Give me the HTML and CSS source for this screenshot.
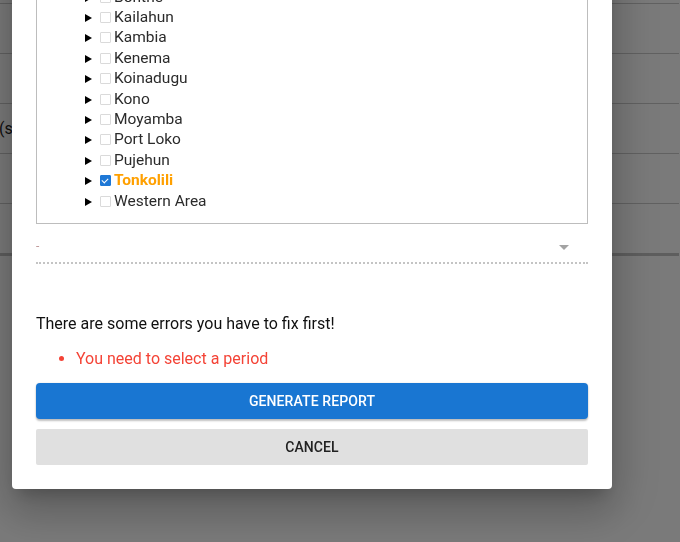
FILE: index.html
```html
<!DOCTYPE html>
<html lang="en">
<head>
    <meta charset="UTF-8">
    <meta name="viewport" content="width=device-width, initial-scale=1.0">
    <title>Generate report</title>
    <link rel="stylesheet" href="styles.css">
</head>
<body>
    <!-- pagina sotto il dialog -->
    <table class="page-table">
        <tr><td></td><td></td></tr>
        <tr><td></td><td></td></tr>
        <tr><td></td><td></td></tr>
        <tr><td>(sum)</td><td></td></tr>
        <tr><td></td><td></td></tr>
        <tr><td></td><td></td></tr>
    </table>

    <div class="overlay"></div>

    <div class="dialog">
        <div class="tree-box">
            <ul class="tree">
                <li><span class="arrow open"></span><span class="check"></span>Sierra Leone
                    <ul class="tree">
                        <li><span class="arrow"></span><span class="check"></span>Bo</li>
                        <li><span class="arrow"></span><span class="check"></span>Bombali</li>
                        <li><span class="arrow"></span><span class="check"></span>Bonthe</li>
                        <li><span class="arrow"></span><span class="check"></span>Kailahun</li>
                        <li><span class="arrow"></span><span class="check"></span>Kambia</li>
                        <li><span class="arrow"></span><span class="check"></span>Kenema</li>
                        <li><span class="arrow"></span><span class="check"></span>Koinadugu</li>
                        <li><span class="arrow"></span><span class="check"></span>Kono</li>
                        <li><span class="arrow"></span><span class="check"></span>Moyamba</li>
                        <li><span class="arrow"></span><span class="check"></span>Port Loko</li>
                        <li><span class="arrow"></span><span class="check"></span>Pujehun</li>
                        <li class="selected"><span class="arrow"></span><span class="check checked"></span>Tonkolili</li>
                        <li><span class="arrow"></span><span class="check"></span>Western Area</li>
                    </ul>
                </li>
            </ul>
        </div>

        <div class="select-field">
            <span class="select-value">-</span>
            <span class="select-arrow"></span>
        </div>

        <div class="errors">
            <p>There are some errors you have to fix first!</p>
            <ul>
                <li>You need to select a period</li>
            </ul>
        </div>

        <button type="button" class="btn btn-primary">Generate report</button>
        <button type="button" class="btn btn-cancel">Cancel</button>
    </div>
</body>
</html>
```

FILE: styles.css
```css
body {
    margin: 0;
    font-family: Roboto, "Liberation Sans", sans-serif;
    background-color: #fff;
    height: 542px;
    overflow: hidden;
}
.page-table {
    border-collapse: collapse;
    width: 100%;
    margin-top: -46px;
    margin-left: -1px;
    font-size: 16px;
    color: #222;
}
.page-table td {
    height: 49px;
    padding: 0;
    border-bottom: 1px solid #cbcbcb;
}
.page-table tr:last-child td {
    border-bottom: 3px solid #c4c4c4;
}
.overlay {
    position: fixed;
    top: 0;
    left: 0;
    right: 0;
    bottom: 0;
    background-color: rgba(0, 0, 0, 0.52);
}
.dialog {
    position: absolute;
    left: 12px;
    bottom: 53px;
    width: 600px;
    box-sizing: border-box;
    padding: 24px 24px 24px 24px;
    background-color: white;
    border-radius: 4px;
    box-shadow: 0 11px 15px -7px rgba(0, 0, 0, 0.2), 0 24px 38px 3px rgba(0, 0, 0, 0.14), 0 9px 46px 8px rgba(0, 0, 0, 0.12);
}
.tree-box {
    border: 1px solid #bdbdbd;
    padding: 8px 0 12px 0;
}
.tree {
    list-style: none;
    margin: 0;
    padding: 0 0 0 29px;
}
.tree .tree {
    padding-left: 20px;
}
.tree li {
    font-size: 15.5px;
    line-height: 20.4px;
    color: #2b2b2b;
    white-space: nowrap;
}
.arrow {
    display: inline-block;
    width: 0;
    height: 0;
    border-top: 4px solid transparent;
    border-bottom: 4px solid transparent;
    border-left: 7px solid #000;
    margin-right: 8px;
    margin-left: -1px;
    vertical-align: 0;
}
.arrow.open {
    border-left: 4px solid transparent;
    border-right: 4px solid transparent;
    border-top: 7px solid #000;
    border-bottom: 0;
}
.check {
    display: inline-block;
    width: 9px;
    height: 9px;
    border: 1px solid #dadada;
    border-radius: 1px;
    margin-right: 3px;
    vertical-align: -1px;
    position: relative;
}
.check.checked {
    background-color: #1e78d6;
    border-color: #1e78d6;
}
.check.checked::after {
    content: "";
    position: absolute;
    left: 2px;
    top: 0;
    width: 5px;
    height: 3px;
    border-left: 1.5px solid white;
    border-bottom: 1.5px solid white;
    transform: translate(-1px, 2px) rotate(-45deg);
}
.tree li.selected {
    color: #ffa000;
    font-weight: bold;
}
.select-field {
    display: flex;
    justify-content: space-between;
    align-items: center;
    margin-top: 13px;
    padding: 0 19px 7px 0;
    border-bottom: 2px dotted #c4c4c4;
    height: 18px;
}
.select-value {
    font-size: 12px;
    color: #c09a9a;
}
.select-arrow {
    width: 0;
    height: 0;
    border-left: 5px solid transparent;
    border-right: 5px solid transparent;
    border-top: 5px solid #a3a3a3;
    margin-top: 2px;
}
.errors {
    margin-top: 50px;
    font-size: 16px;
}
.errors p {
    margin: 0;
    color: #111;
}
.errors ul {
    margin: 16px 0 15px 0;
    padding-left: 40px;
    color: #f44336;
}
.btn {
    display: block;
    width: 100%;
    height: 36px;
    border: none;
    border-radius: 4px;
    font-family: Roboto, "Liberation Sans", sans-serif;
    font-size: 14px;
    font-weight: 500;
    text-transform: uppercase;
    letter-spacing: 0.1px;
    cursor: pointer;
}
.btn-primary {
    background-color: #1976d2;
    color: white;
    box-shadow: 0 2px 2px rgba(0, 0, 0, 0.24), 0 0 2px rgba(0, 0, 0, 0.12);
}
.btn-cancel {
    margin-top: 10px;
    background-color: #e0e0e0;
    color: #212121;
    border-radius: 2px;
}
```
